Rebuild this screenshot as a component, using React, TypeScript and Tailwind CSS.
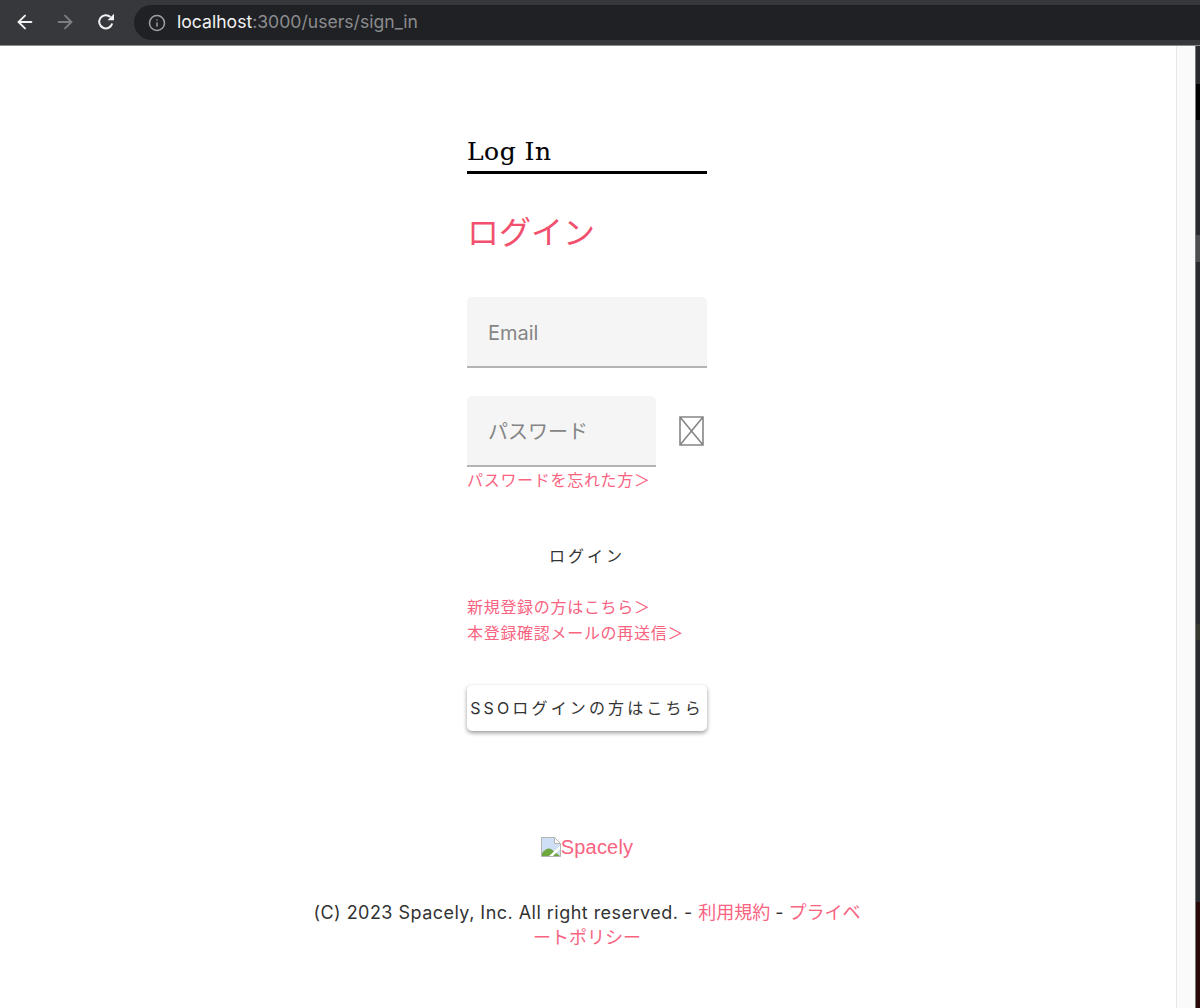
import React from "react";
import { ArrowLeft, ArrowRight, Info } from "lucide-react";

const sans = "font-['Inter','Noto_Sans_CJK_JP',sans-serif]";

const BrowserBar = () => (
  <div className="flex h-[46px] shrink-0 border-b border-[#8a8b8d] bg-[#37383c] pt-[5px]">
    <div className="flex w-[134px] shrink-0 items-center pl-[14px] pb-[6px]">
      <ArrowLeft size={22} strokeWidth={2} className="text-[#f1f2f3]" />
      <ArrowRight size={22} strokeWidth={2} className="ml-[18px] text-[#7d7e81]" />
      <svg width="20" height="20" viewBox="0 0 20 20" className="ml-[20px]">
        <path d="M16.2 11.5A6.6 6.6 0 1 1 14.4 5" fill="none" stroke="#f1f2f3" strokeWidth="2" />
        <path d="M11.6 8.2h6.4V1.8z" fill="#f1f2f3" />
      </svg>
    </div>
    <div className="flex h-[35px] flex-1 items-center rounded-l-[18px] bg-[#202124] pl-[14px]">
      <Info size={18} strokeWidth={2} className="text-[#a0a1a4]" />
      <span className="ml-[11px] text-[17.6px] text-[#f1f2f3]">
        localhost<span className="text-[#8b8c8f]">:3000/users/sign_in</span>
      </span>
    </div>
  </div>
);

const TextField = ({ label, className }: { label: string; className: string }) => (
  <div className={`flex h-[71px] items-center rounded-t-[5px] border-b-2 border-[#b4b4b4] bg-[#f5f5f5] pl-[21px] pt-[3px] text-[20px] text-[#858585] ${className}`}>
    {label}
  </div>
);

const RightEdge = () => (
  <div className="flex w-[5px] shrink-0 flex-col border-l border-[#77787a] bg-[#2a2b2e]">
    <div className="h-[38px]" />
    <div className="h-[36px] bg-black" />
    <div className="h-[115px]" />
    <div className="h-[27px] bg-[#4d4e50]" />
    <div className="h-[362px]" />
    <div className="h-[16px] bg-[#37362f]" />
    <div className="h-[262px]" />
    <div className="flex-1 bg-[#2a0807]" />
  </div>
);

export default function App() {
  return (
    <div className={`flex h-[1008px] w-[1200px] flex-col overflow-hidden bg-white ${sans}`}>
      <BrowserBar />
      <div className="flex min-h-0 flex-1">
        <main className="flex min-w-0 flex-1 flex-col items-center pr-[2px] pt-[90px]">
          <div className="w-[240px]">
            <h2 className="h-[38px] border-b-[3px] border-black font-['DejaVu_Serif',serif] text-[25px] leading-[31px] tracking-[0.5px] text-black [-webkit-text-stroke:0.15px_black]">
              Log In
            </h2>
            <h1 className="mt-[36px] h-[46px] text-[32px] leading-[45px] text-[#f2506e]">ログイン</h1>
            <TextField label="Email" className="mt-[41px] w-full" />
            <div className="mt-[28px] flex items-center">
              <TextField label="パスワード" className="w-[189px]" />
              <svg width="25" height="30" viewBox="0 0 25 30" className="ml-[23px] mb-[1px]">
                <path d="M1 1h23v28H1zM1 1l23 28M24 1L1 29" fill="none" stroke="#858585" strokeWidth="1.6" />
              </svg>
            </div>
            <a className="mt-[1px] block text-[16px] leading-[24px] tracking-[0.7px] text-[#f8637f]">パスワードを忘れた方＞</a>
            <div className="mt-[52px] text-center text-[16px] leading-[24px] tracking-[3px] text-[#333333]">ログイン</div>
            <div className="mt-[26px] text-[16px] leading-[26px] tracking-[0.7px] text-[#f8637f]">
              <a className="block">新規登録の方はこちら＞</a>
              <a className="block">本登録確認メールの再送信＞</a>
            </div>
            <button className="mt-[39px] h-[46px] w-full whitespace-nowrap rounded-[5px] bg-white text-[16px] tracking-[3.15px] text-[#333333] shadow-[0_2px_4px_rgba(0,0,0,0.4)]">
              SSOログインの方はこちら
            </button>
          </div>
          <a className="mt-[104px] flex items-center font-['Liberation_Sans',sans-serif] text-[20px] leading-[24px] tracking-[0.2px] text-[#f8637f]">
            <svg width="20" height="20" viewBox="0 0 20 20">
              <path d="M0.5 0.5h13l6 6v13H0.5z" fill="#cfdff5" stroke="#b4b4b4" />
              <path d="M13.5 0.5v6h6z" fill="#ffffff" stroke="#b4b4b4" />
              <path d="M1 19v-3q5-6 9-4l9 7z" fill="#6fa63e" />
              <path d="M8 19L19 9v3l-7 7z" fill="#ffffff" />
            </svg>
            Spacely
          </a>
          <p className="mt-[41px] whitespace-nowrap text-center text-[18px] leading-[25px] text-[#333333]">
            <span className="tracking-[0.47px]">(C) 2023 Spacely, Inc. All right reserved. - </span>
            <a className="text-[#f8637f]">利用規約</a> - <a className="text-[#f8637f]">プライベ<br />ートポリシー</a>
          </p>
        </main>
        <div className="w-[19px] shrink-0 border-l border-[#e8e8e8] bg-[#fafafa]" />
        <RightEdge />
      </div>
    </div>
  );
}
